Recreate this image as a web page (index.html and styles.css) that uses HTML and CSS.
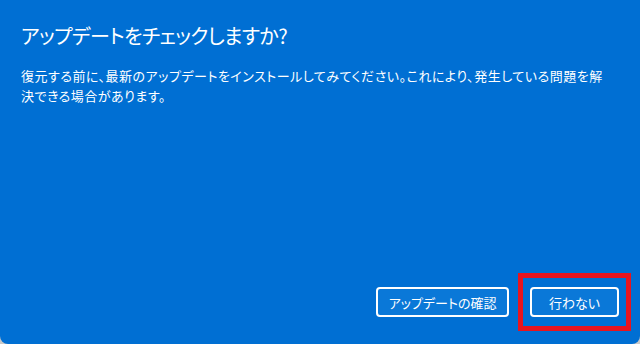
FILE: index.html
```html
<!DOCTYPE html>
<html lang="ja">
<head>
<meta charset="utf-8">
<link rel="stylesheet" href="styles.css">
</head>
<body>
<div class="dialog">
  <h1 class="title">アップデートをチェックしますか?</h1>
  <p class="desc">復元する前に、最新のアップデートをインストールしてみてください。これにより、発生している問題を解決できる場合があります。</p>
  <div class="actions">
    <button class="btn btn-check">アップデートの確認</button>
    <div class="mark-wrap">
      <button class="btn btn-skip">行わない</button>
      <span class="mark"></span>
    </div>
  </div>
</div>
</body>
</html>
```
FILE: styles.css
```css
html, body {
  margin: 0;
  padding: 0;
  background: #c9c9c9;
}
.dialog {
  width: 640px;
  height: 344px;
  box-sizing: border-box;
  background: #006fd3;
  border-radius: 0 0 8px 8px;
  padding: 22px 21px 27px 21px;
  display: flex;
  flex-direction: column;
  color: #ffffff;
  font-family: "Noto Sans CJK JP", "Noto Sans", sans-serif;
  font-feature-settings: "palt";
}
.title {
  margin: 0;
  font-size: 20px;
  line-height: 28px;
  font-weight: 400;
  letter-spacing: -0.6px;
}
.desc {
  margin: 16px 0 0 0;
  max-width: 590px;
  font-size: 13px;
  line-height: 20px;
  font-weight: 400;
  letter-spacing: 0.5px;
  line-break: anywhere;
}
.actions {
  margin-top: auto;
  display: flex;
  justify-content: flex-end;
  align-items: flex-end;
  gap: 21px;
}
.btn {
  height: 30px;
  box-sizing: border-box;
  border: 2px solid #ffffff;
  border-radius: 4px;
  background: #0a78d8;
  color: #ffffff;
  font-family: "Noto Sans CJK JP", "Noto Sans", sans-serif;
  font-feature-settings: "palt";
  font-size: 13px;
  padding: 0;
  display: block;
}
.btn-check {
  width: 133px;
}
.btn-skip {
  width: 89px;
}
.mark-wrap {
  position: relative;
}
.mark {
  position: absolute;
  left: -12px;
  top: -14px;
  width: 113px;
  height: 58px;
  box-sizing: border-box;
  border: 5px solid #e8141e;
}
```
